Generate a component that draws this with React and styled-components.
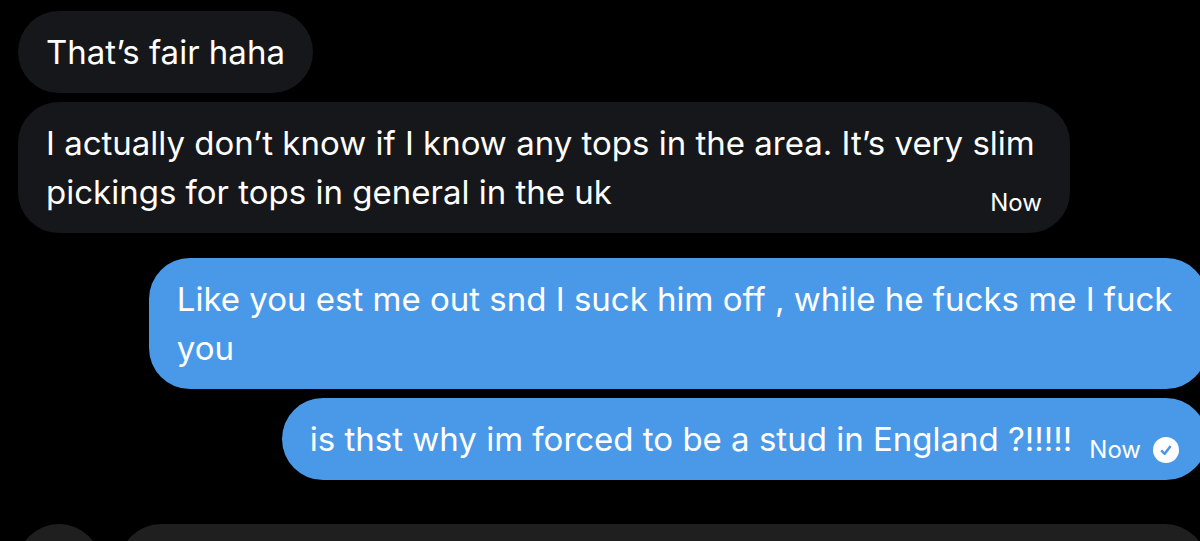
import styled, { createGlobalStyle } from 'styled-components';

const messages = [
  { id: 1, text: 'That’s fair haha' },
  {
    id: 2,
    text: 'I actually don’t know if I know any tops in the area. It’s very slim pickings for tops in general in the uk',
    time: 'Now',
  },
  {
    id: 3,
    own: true,
    text: 'Like you est me out snd I suck him off , while he fucks me I fuck you',
  },
  {
    id: 4,
    own: true,
    text: 'is thst why im forced to be a stud in England ?!!!!!',
    time: 'Now',
    delivered: true,
  },
];

export default function App() {
  const received = messages.filter(message => !message.own);
  const sent = messages.filter(message => message.own);

  return (
    <>
      <GlobalStyle />
      <Chat>
        <Thread>
          <MessageGroup>
            {received.map(message => (
              <Message key={message.id} message={message} />
            ))}
          </MessageGroup>
          <MessageGroup $own>
            {sent.map(message => (
              <Message key={message.id} message={message} />
            ))}
          </MessageGroup>
        </Thread>
        <Composer>
          <AddButton type="button" aria-label="Add attachment" />
          <MessageInput type="text" aria-label="Message" />
        </Composer>
      </Chat>
    </>
  );
}

function Message({ message }) {
  return (
    <Bubble $own={message.own}>
      {message.text}
      {message.time && (
        <Meta>
          {message.time}
          {message.delivered && <DeliveredIcon />}
        </Meta>
      )}
    </Bubble>
  );
}

function DeliveredIcon() {
  return (
    <svg width="26" height="26" viewBox="0 0 26 26" role="img" aria-label="Delivered">
      <circle cx="13" cy="13" r="13" fill="#fff" />
      <path
        d="M8.2 13.3l3.5 3.5 5.9-7.8"
        fill="none"
        stroke="#4a99e9"
        strokeWidth="2.5"
        strokeLinejoin="round"
      />
    </svg>
  );
}

const GlobalStyle = createGlobalStyle`
  * {
    box-sizing: border-box;
  }
  body {
    margin: 0;
    background: #000;
    color: #fff;
    font-family: Inter, 'Liberation Sans', sans-serif;
  }
`;

const Chat = styled.main`
  display: flex;
  flex-direction: column;
  height: 100vh;
  overflow: hidden;
`;

const Thread = styled.div`
  display: flex;
  flex-direction: column;
  flex-shrink: 0;
  gap: 25px;
  padding: 11px 0 44px 18px;
`;

// sent bubbles run slightly past the right edge of the window
const MessageGroup = styled.section`
  display: flex;
  flex-direction: column;
  align-items: ${({ $own }) => ($own ? 'flex-end' : 'flex-start')};
  gap: 9px;
  margin-right: ${({ $own }) => ($own ? '-7px' : '0')};
`;

const Bubble = styled.p`
  max-width: 89%;
  margin: 0;
  padding: 17px 28px 16px;
  border-radius: 41px;
  background: ${({ $own }) => ($own ? '#4a99e9' : '#16171a')};
  font-size: 33px;
  line-height: 49px;
`;

const Meta = styled.small`
  display: flex;
  align-items: center;
  float: right;
  gap: 12px;
  margin: 21px 0 0 17px;
  font-size: 24px;
  line-height: 28px;
`;

const Composer = styled.form`
  display: flex;
  flex-shrink: 0;
  gap: 18px;
  margin-right: -7px;
  padding-left: 17px;
`;

const AddButton = styled.button`
  width: 84px;
  height: 84px;
  border: 0;
  border-radius: 50%;
  background: #1f1f1f;
`;

const MessageInput = styled.input`
  flex: 1;
  height: 84px;
  border: 0;
  border-radius: 42px;
  background: #1f1f1f;
`;
